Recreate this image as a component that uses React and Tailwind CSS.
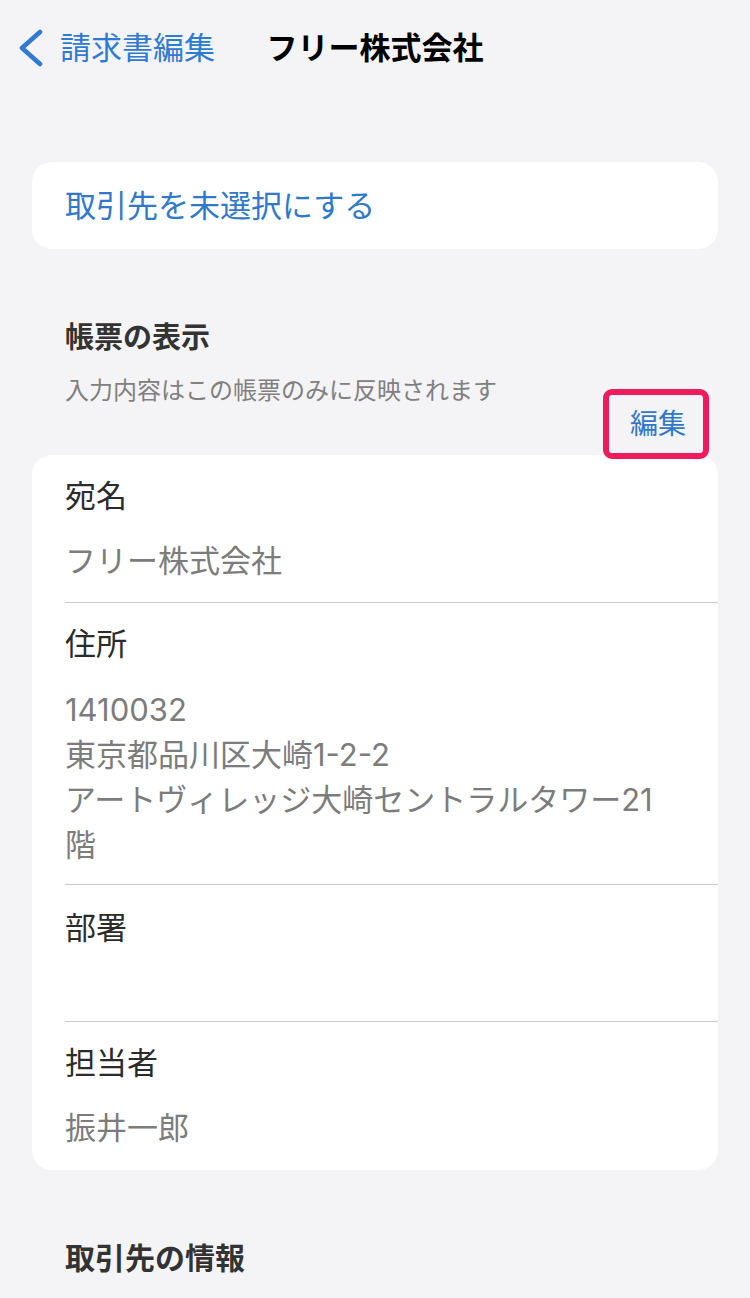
const FONT = "font-['Inter','Noto_Sans_CJK_JP',sans-serif]"

const Row = ({ label, children, last, className = '' }) => (
  <div className="pl-[33px]">
    <div className={`pr-[40px] ${last ? '' : 'border-b border-[#c9c9cc]'} ${className}`}>
      <div className="text-[31px] leading-[40px] text-[#2b2b2b]">{label}</div>
      {children}
    </div>
  </div>
)

export default function App() {
  return (
    <div className={`min-h-[1298px] w-[750px] bg-[#f4f3f5] ${FONT}`}>
      {/* nav bar */}
      <header className="grid h-[96px] grid-cols-[1fr_auto_1fr] items-center">
        <button className="flex items-center gap-[16px] pl-[16px] text-[#2f7bd2]">
          <svg width="28" height="38" viewBox="0 0 28 38" fill="none">
            <path d="M24 3 L6 19 L24 35" stroke="currentColor" strokeWidth="4.6" strokeLinecap="round" strokeLinejoin="round" />
          </svg>
          <span className="text-[31px] leading-[40px]">請求書編集</span>
        </button>
        <h1 className="text-[31px] font-bold leading-[40px] text-black">フリー株式会社</h1>
        <div />
      </header>

      <div className="mx-[32px] mt-[66px] flex h-[87px] items-center rounded-[20px] bg-white px-[33px]">
        <span className="text-[31px] leading-[40px] text-[#3079c9]">取引先を未選択にする</span>
      </div>

      {/* 帳票の表示 */}
      <div className="mt-[69px] px-[65px]">
        <h2 className="text-[29px] font-bold leading-[40px] text-[#333]">帳票の表示</h2>
        <p className="mt-[17px] text-[24px] leading-[32px] text-[#808080]">
          入力内容はこの帳票のみに反映されます
        </p>
      </div>
      <div className="-mt-[3px] flex justify-end pr-[64px]">
        <button className="relative z-10 text-[28px] leading-[40px] text-[#3079c9]">
          編集
          {/* highlight frame */}
          <span className="pointer-events-none absolute left-[-27px] right-[-23px] top-[-15px] bottom-[-15px] rounded-[9px] border-[6px] border-[#ef1b5c]" />
        </button>
      </div>

      <div className="relative mx-[32px] mt-[11px] rounded-[20px] bg-white">
        <Row label="宛名" className="pt-[21px] pb-[21px]">
          <div className="mt-[25px] text-[31px] leading-[40px] text-[#7c7c7c]">フリー株式会社</div>
        </Row>
        <Row label="住所" className="pt-[21px] pb-[17px]">
          <div className="mt-[23px] text-[31px] leading-[45px] text-[#7c7c7c]">
            1410032
            <br />
            東京都品川区大崎1-2-2
            <br />
            アートヴィレッジ大崎セントラルタワー21階
          </div>
        </Row>
        <Row label="部署" className="pt-[23px] pb-[21px]">
          <div className="h-[52px]" />
        </Row>
        <Row label="担当者" last className="pt-[21px] pb-[22px]">
          <div className="mt-[25px] text-[31px] leading-[40px] text-[#7c7c7c]">振井一郎</div>
        </Row>
      </div>

      <div className="mt-[68px] px-[65px]">
        <h2 className="text-[30px] font-bold leading-[40px] text-[#333]">取引先の情報</h2>
      </div>
    </div>
  )
}
